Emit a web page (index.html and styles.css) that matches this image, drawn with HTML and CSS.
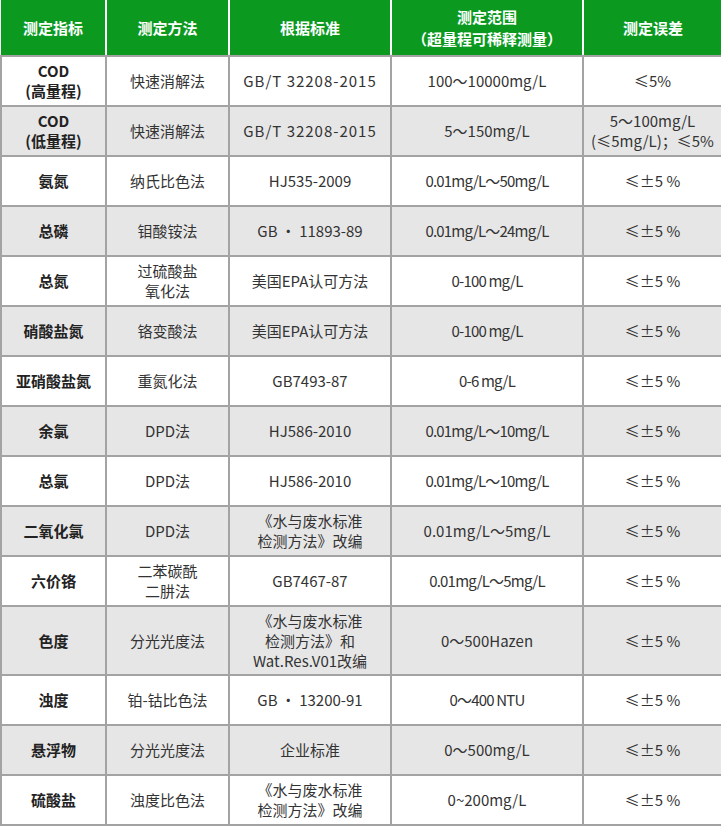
FILE: index.html
```html
<!DOCTYPE html>
<html lang="zh-CN">
<head>
<meta charset="utf-8">
<title>测定指标</title>
<link rel="stylesheet" href="styles.css">
</head>
<body>
<table class="spec">
  <colgroup>
    <col class="c1"><col class="c2"><col class="c3"><col class="c4"><col class="c5">
  </colgroup>
  <thead>
    <tr class="head">
      <th>测定指标</th>
      <th>测定方法</th>
      <th>根据标准</th>
      <th>测定范围<br>（超量程可稀释测量）</th>
      <th>测定误差</th>
    </tr>
  </thead>
  <tbody>
    <tr class="odd"><td class="name">COD<br>(高量程)</td><td>快速消解法</td><td class="wide">GB/T 32208-2015</td><td>100～10000mg/L</td><td>≤5%</td></tr>
    <tr class="even"><td class="name">COD<br>(低量程)</td><td>快速消解法</td><td class="wide">GB/T 32208-2015</td><td>5～150mg/L</td><td>5～100mg/L<br>(≤5mg/L)；≤5%</td></tr>
    <tr class="odd"><td class="name">氨氮</td><td>纳氏比色法</td><td>HJ535-2009</td><td class="tight">0.01mg/L～50mg/L</td><td>≤±5 %</td></tr>
    <tr class="even"><td class="name">总磷</td><td>钼酸铵法</td><td>GB · 11893-89</td><td class="tight">0.01mg/L～24mg/L</td><td>≤±5 %</td></tr>
    <tr class="odd"><td class="name">总氮</td><td>过硫酸盐<br>氧化法</td><td>美国EPA认可方法</td><td class="tight">0-100 mg/L</td><td>≤±5 %</td></tr>
    <tr class="even"><td class="name">硝酸盐氮</td><td>铬变酸法</td><td>美国EPA认可方法</td><td class="tight">0-100 mg/L</td><td>≤±5 %</td></tr>
    <tr class="odd"><td class="name">亚硝酸盐氮</td><td>重氮化法</td><td>GB7493-87</td><td class="tight">0-6 mg/L</td><td>≤±5 %</td></tr>
    <tr class="even"><td class="name">余氯</td><td>DPD法</td><td>HJ586-2010</td><td class="tight">0.01mg/L～10mg/L</td><td>≤±5 %</td></tr>
    <tr class="odd"><td class="name">总氯</td><td>DPD法</td><td>HJ586-2010</td><td class="tight">0.01mg/L～10mg/L</td><td>≤±5 %</td></tr>
    <tr class="even"><td class="name">二氧化氯</td><td>DPD法</td><td>《水与废水标准<br>检测方法》改编</td><td>0.01mg/L～5mg/L</td><td>≤±5 %</td></tr>
    <tr class="odd"><td class="name">六价铬</td><td>二苯碳酰<br>二肼法</td><td>GB7467-87</td><td class="tight">0.01mg/L～5mg/L</td><td>≤±5 %</td></tr>
    <tr class="even tall"><td class="name">色度</td><td>分光光度法</td><td>《水与废水标准<br>检测方法》和<br>Wat.Res.V01改编</td><td>0～500Hazen</td><td>≤±5 %</td></tr>
    <tr class="odd"><td class="name">浊度</td><td>铂-钴比色法</td><td>GB · 13200-91</td><td class="tight">0～400 NTU</td><td>≤±5 %</td></tr>
    <tr class="even"><td class="name">悬浮物</td><td>分光光度法</td><td>企业标准</td><td>0～500mg/L</td><td>≤±5 %</td></tr>
    <tr class="odd"><td class="name">硫酸盐</td><td>浊度比色法</td><td>《水与废水标准<br>检测方法》改编</td><td>0~200mg/L</td><td>≤±5 %</td></tr>
  </tbody>
</table>
</body>
</html>
```

FILE: styles.css
```css
html, body {
  margin: 0;
  padding: 0;
  background: #ffffff;
}

body {
  font-family: "Noto Sans CJK SC", "Noto Sans", sans-serif;
  color: #333333;
}

.spec {
  width: 721px;
  border-collapse: collapse;
  table-layout: fixed;
}

.c1 { width: 105px; }
.c2 { width: 123px; }
.c3 { width: 162px; }
.c4 { width: 192px; }
.c5 { width: 139px; }

.spec th,
.spec td {
  text-align: center;
  vertical-align: middle;
  padding: 0 2px;
}

.head th {
  height: 55px;
  background: #0b9a1f;
  color: #ffffff;
  font-size: 15px;
  font-weight: 700;
  line-height: 22px;
  border-left: 2px solid #ffffff;
  border-right: 2px solid #ffffff;
  border-bottom: 2px solid #a3a3a3;
}

.head th:first-child { border-left: none; }
.head th:last-child { border-right: none; }

.spec td {
  border: 2px solid #a3a3a3;
  font-size: 15px;
  line-height: 20px;
  height: 48px;
  color: #333333;
}

.odd td { background: #ffffff; }
.even td { background: #e6e6e6; }

.tall td { height: 67px; }

.spec td.name {
  font-weight: 700;
  color: #222222;
}

.spec td.wide {
  letter-spacing: 1px;
}

.spec td.tight {
  letter-spacing: -0.8px;
}
```
